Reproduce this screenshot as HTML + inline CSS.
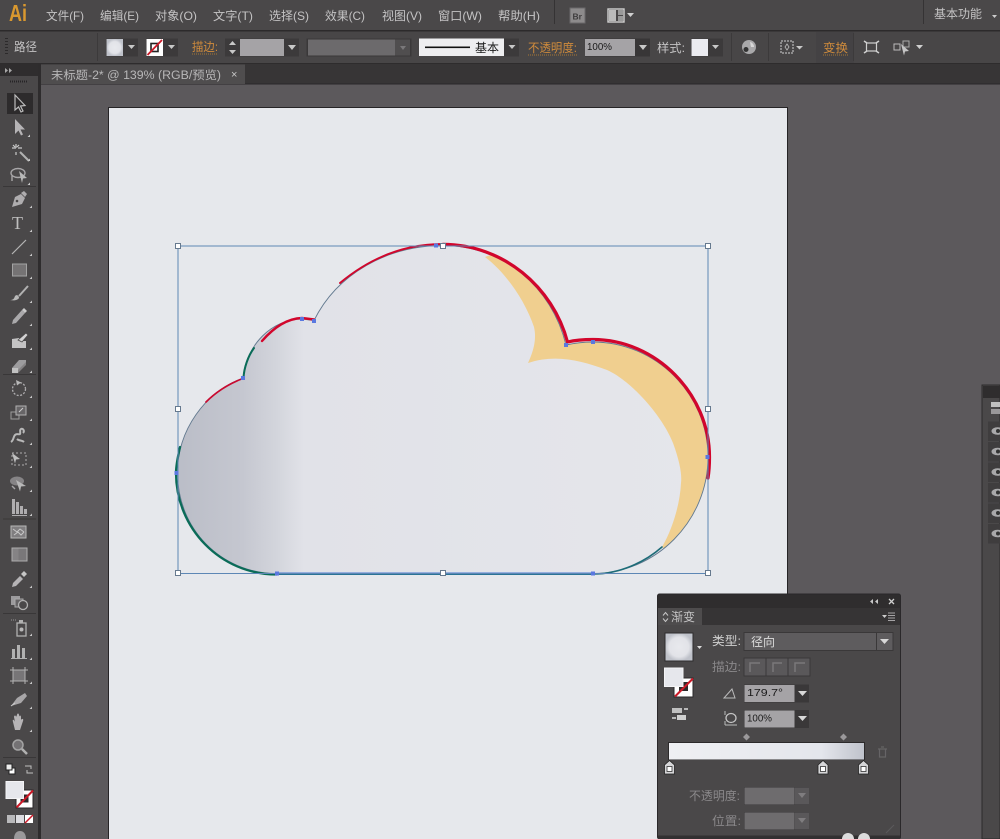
<!DOCTYPE html>
<html><head><meta charset="utf-8"><style>
html,body{margin:0;padding:0;width:1000px;height:839px;overflow:hidden;background:#5c595c}
svg{display:block;filter:blur(.35px)}
text{font-family:"Liberation Sans","Noto Sans CJK SC",sans-serif;fill:#c4c3c4;font-size:12px}
.o{fill:#cf8b3c}
.d{fill:#8a888a}
.k{fill:#1a1a1a}
.i{fill:#b9b8ba;stroke:none}
.l{fill:none;stroke:#b5b4b6;stroke-width:1.4}
</style></head><body>
<svg width="1000" height="839" viewBox="0 0 1000 839" xmlns="http://www.w3.org/2000/svg">
<defs>
<linearGradient id="cg" gradientUnits="userSpaceOnUse" x1="176" y1="0" x2="708" y2="0">
<stop offset="0" stop-color="#babdc7"/><stop offset=".125" stop-color="#c5c7d0"/><stop offset=".19" stop-color="#d3d5dc"/><stop offset=".24" stop-color="#e1e2e8"/><stop offset="1" stop-color="#e5e6eb"/>
</linearGradient>
<linearGradient id="bar" x1="0" x2="1" y1="0" y2="0">
<stop offset="0" stop-color="#eff0f3"/><stop offset=".78" stop-color="#e4e6ec"/><stop offset="1" stop-color="#c0c3cc"/>
</linearGradient>
<radialGradient id="sw"><stop offset="0" stop-color="#e8e9ed"/><stop offset=".7" stop-color="#e2e3e8"/><stop offset="1" stop-color="#bfc2ca"/></radialGradient>
<clipPath id="cc"><path d="M277 573.500C220 573.500 177.500 528 177.500 473C177.500 430 205 392 243 378C246 345 272 319 302 319L314 320.500C337 274 387 245.500 443 245.500C503 245.500 552 287 566 345C575 343 584 342 593 342C656 342 708 394 708 457C708 521 656 573.500 593 573.500Z"/></clipPath>
<path id="cl" d="M277 573.500C220 573.500 177.500 528 177.500 473C177.500 430 205 392 243 378C246 345 272 319 302 319L314 320.500C337 274 387 245.500 443 245.500C503 245.500 552 287 566 345C575 343 584 342 593 342C656 342 708 394 708 457C708 521 656 573.500 593 573.500Z"/>
</defs>

<!-- canvas -->
<rect width="1000" height="839" fill="#5c595c"/>
<rect x="109" y="108" width="679" height="731" fill="#e6e8ec"/>
<path d="M108.500 839V107.500H787.500V839" fill="none" stroke="#262426" stroke-width="1"/>

<!-- cloud -->
<use href="#cl" fill="url(#cg)"/>
<g clip-path="url(#cc)">
<path d="M485 257C505 272 525 300 534 327C537 340 533 352 528 363C555 354 580 360 607 370C630 380 662 415 673 443C680 462 682 475 681 483C680 505 672 530 662 547L730 590V300L560 230Z" fill="#f0cf8f"/>
</g>
<use href="#cl" fill="none" stroke="#62798f" stroke-width=".9"/>
<g fill="none" stroke-linecap="round">
<path d="M443 244.300C503 244.300 553 287 567.500 342C576 340 585 339.500 593 339.500C656 339.500 709.500 394 709.500 457C709.500 465 709 472 708 478" stroke="#d2062c" stroke-width="3.200"/>
<path d="M443 244C405 244 370 258 340 283" stroke="#d2062c" stroke-width="1.900"/>
<path d="M262 341C275 326 288 318.500 302 318L314 319.500" stroke="#d2062c" stroke-width="2.400"/>
<path d="M206 402C216 392 228 384 244 378" stroke="#c90a30" stroke-width="1.700"/>
<path d="M180 447C177 460 176 468 176 473C176 528 220 574.500 277 574.500" stroke="#0a6c58" stroke-width="2.300"/>
<path d="M243.500 378C244 368 248 356 254 348" stroke="#0a6c58" stroke-width="2"/>
<path d="M593 574C620 574 645 562 662 547" stroke="#1d6c78" stroke-width="1.600"/>
<path d="M277 574.300H593" stroke="#0a6c58" stroke-width="1.500"/>
</g>
<path d="M277 573.500H593" stroke="#4a7ad2" stroke-width="2" fill="none"/>
<!-- selection -->
<rect x="178" y="246" width="530" height="327.500" fill="none" stroke="#5d87b5" stroke-width="1"/>
<g fill="#fff" stroke="#66798e" stroke-width="1">
<rect x="175.500" y="243.500" width="5" height="5"/><rect x="440.500" y="243.500" width="5" height="5"/><rect x="705.500" y="243.500" width="5" height="5"/>
<rect x="175.500" y="406.500" width="5" height="5"/><rect x="705.500" y="406.500" width="5" height="5"/>
<rect x="175.500" y="570.500" width="5" height="5"/><rect x="440.500" y="570.500" width="5" height="5"/><rect x="705.500" y="570.500" width="5" height="5"/>
</g>
<g fill="#5a78e0">
<rect x="241" y="376" width="4" height="4"/><rect x="300" y="317" width="4" height="4"/><rect x="312" y="319" width="4" height="4"/><rect x="174.500" y="471" width="4" height="4"/>
<rect x="275" y="571.500" width="4" height="4"/><rect x="591" y="571.500" width="4" height="4"/><rect x="705.500" y="455" width="4" height="4"/><rect x="564" y="343" width="4" height="4"/><rect x="591" y="340" width="4" height="4"/><rect x="434" y="243.500" width="4" height="4"/>
</g>

<!-- menu bar -->
<rect width="1000" height="31" fill="#4a4849"/>
<rect y="30" width="1000" height="1.500" fill="#2c2a2b"/>
<text x="9" y="21" style="font-size:23px;font-weight:bold;fill:#d9982f" textLength="18" lengthAdjust="spacingAndGlyphs">Ai</text>
<g style="font-size:12px">
<text x="46" y="20" textLength="38" lengthAdjust="spacingAndGlyphs">文件(F)</text>
<text x="100" y="20" textLength="39" lengthAdjust="spacingAndGlyphs">编辑(E)</text>
<text x="155" y="20" textLength="42" lengthAdjust="spacingAndGlyphs">对象(O)</text>
<text x="213" y="20" textLength="40" lengthAdjust="spacingAndGlyphs">文字(T)</text>
<text x="269" y="20" textLength="40" lengthAdjust="spacingAndGlyphs">选择(S)</text>
<text x="325" y="20" textLength="40" lengthAdjust="spacingAndGlyphs">效果(C)</text>
<text x="382" y="20" textLength="40" lengthAdjust="spacingAndGlyphs">视图(V)</text>
<text x="438" y="20" textLength="44" lengthAdjust="spacingAndGlyphs">窗口(W)</text>
<text x="498" y="20" textLength="42" lengthAdjust="spacingAndGlyphs">帮助(H)</text>
<text x="934" y="18" textLength="48" lengthAdjust="spacingAndGlyphs">基本功能</text>
</g>
<rect x="554" y="0" width="1" height="24" fill="#353334"/>
<rect x="923" y="0" width="1" height="24" fill="#353334"/>
<rect x="570" y="8" width="15" height="15" fill="#8d8b8c" stroke="#6a686a"/>
<text x="572.500" y="19.500" style="font-size:8.500px;font-weight:bold;fill:#3e3c3d">Br</text>
<rect x="608" y="9" width="16" height="13" fill="none" stroke="#d0d0d0" stroke-width="1.400"/>
<rect x="609" y="10" width="7" height="11" fill="#bbb"/><rect x="618" y="10" width="5" height="5" fill="#999"/><rect x="618" y="16" width="5" height="5" fill="#999"/>
<path d="M627 13h7l-3.500 4z" fill="#d0d0d0"/>
<path d="M992 15h5l-2.500 3z" fill="#ccc"/>

<!-- control bar -->
<rect y="31.500" width="1000" height="32" fill="#484647"/>
<rect y="63" width="1000" height="1" fill="#2e2c2d"/>
<g fill="#2c2a2b"><rect x="5" y="38" width="3" height="1"/><rect x="5" y="41" width="3" height="1"/><rect x="5" y="44" width="3" height="1"/><rect x="5" y="47" width="3" height="1"/><rect x="5" y="50" width="3" height="1"/><rect x="5" y="53" width="3" height="1"/></g>
<text x="14" y="51" textLength="23" lengthAdjust="spacingAndGlyphs">路径</text>
<rect x="97" y="33" width="1" height="28" fill="#3c3a3b"/>
<!-- fill swatch -->
<rect x="106" y="38.500" width="32" height="18" fill="#3c3a3b"/>
<rect x="106.500" y="39" width="16.500" height="17" fill="url(#sw)"/>
<path d="M128 45h7l-3.500 4z" fill="#c8c8c8"/>
<!-- stroke swatch -->
<rect x="146" y="38.500" width="32" height="18" fill="#3c3a3b"/>
<rect x="146.500" y="39" width="16.500" height="17" fill="#fff"/>
<rect x="151" y="43.500" width="7" height="8" fill="none" stroke="#222" stroke-width="1.600"/>
<path d="M147.500 55L162 40" stroke="#cc1a28" stroke-width="1.800"/>
<path d="M168 45h7l-3.500 4z" fill="#c8c8c8"/>
<text x="192" y="51" class="o" textLength="26" lengthAdjust="spacingAndGlyphs">描边:</text>
<path d="M192 54h26" stroke="#a87836" stroke-width="1" stroke-dasharray="1 1"/>
<rect x="225" y="38.500" width="74" height="18" fill="#3c3a3b"/>
<path d="M229 45l3.500-4 3.500 4z M229 50l3.500 4 3.500-4z" fill="#c8c8c8"/>
<rect x="240" y="39" width="44" height="17" fill="#a5a3a6"/>
<path d="M288 45h8l-4 5z" fill="#c8c8c8"/>
<rect x="306.500" y="38.500" width="105" height="18" fill="#3a3839"/>
<rect x="308" y="39.500" width="87" height="16" fill="#6c6a6c"/>
<rect x="395" y="39.500" width="15" height="16" fill="#504e4f"/>
<path d="M400 46h6l-3 4z" fill="#7a787a"/>
<rect x="419" y="38.500" width="85" height="17.500" fill="#eeeef0"/>
<rect x="425" y="46.500" width="45" height="1.600" fill="#111"/>
<text x="475" y="52" class="k" textLength="24" lengthAdjust="spacingAndGlyphs">基本</text>
<rect x="504" y="38.500" width="15" height="18" fill="#3c3a3b"/>
<path d="M508.500 45h7l-3.500 4z" fill="#c8c8c8"/>
<text x="528" y="52" class="o" textLength="49" lengthAdjust="spacingAndGlyphs">不透明度:</text>
<path d="M528 55h50" stroke="#a87836" stroke-width="1" stroke-dasharray="1 1"/>
<rect x="585" y="38.500" width="65" height="18" fill="#383637"/>
<rect x="585" y="39" width="50" height="17" fill="#a5a3a6"/>
<text x="587" y="50" class="k" style="font-size:10px" textLength="25" lengthAdjust="spacingAndGlyphs">100%</text>
<path d="M639 45h8l-4 5z" fill="#c8c8c8"/>
<text x="657" y="52" textLength="28" lengthAdjust="spacingAndGlyphs">样式:</text>
<rect x="691" y="38.500" width="32" height="18" fill="#3c3a3b"/>
<rect x="691.500" y="39" width="16.500" height="17" fill="#ebebf0"/>
<path d="M712 45h7l-3.500 4z" fill="#c8c8c8"/>
<rect x="731" y="33" width="1" height="28" fill="#3c3a3b"/>
<circle cx="749" cy="47" r="7" fill="#a9a8aa"/><circle cx="746" cy="49.500" r="2.500" fill="#333"/><path d="M750 42a5 5 0 0 1 4 5h-3z" fill="#d8d8d8"/>
<rect x="768" y="33" width="1" height="28" fill="#3c3a3b"/>
<rect x="781" y="41" width="12" height="12" fill="none" stroke="#d0d0d0" stroke-dasharray="2 1"/>
<path d="M787 44l2 3-2 3-2-3z" fill="none" stroke="#bbb" stroke-width=".8"/>
<path d="M796 46h7l-3.500 3.500z" fill="#c8c8c8"/>
<rect x="816" y="32" width="38" height="31" fill="#444244"/>
<text x="823" y="52" class="o" textLength="25" lengthAdjust="spacingAndGlyphs">变换</text>
<path d="M823 55h25" stroke="#a87836" stroke-width="1" stroke-dasharray="1 1"/>
<rect x="853" y="33" width="1" height="28" fill="#3c3a3b"/>
<rect x="866.500" y="43" width="10" height="8" fill="none" stroke="#d0d0d0" stroke-width="1.200"/>
<path d="M864 41l3 2M879 41l-3 2M864 53l3-2M879 53l-3-2" stroke="#d0d0d0" stroke-width="1.500"/>
<rect x="894" y="44" width="6" height="6" fill="none" stroke="#bbb"/><rect x="903" y="41" width="6" height="6" fill="none" stroke="#aaa"/>
<path d="M901 44l8 7-4 .5-1 4z" fill="#c5c5c5"/>
<path d="M916 45h7l-3.500 4z" fill="#d0d0d0"/>

<!-- tab bar -->
<rect y="64" width="1000" height="20" fill="#373536"/>
<rect y="83.500" width="1000" height="1" fill="#2a282a"/>
<rect x="41" y="64.500" width="204" height="19.500" fill="#4f4d4e"/>
<text x="51" y="79" style="font-size:11.500px;fill:#b8b7b8" textLength="170" lengthAdjust="spacingAndGlyphs">未标题-2* @ 139% (RGB/预览)</text>
<text x="231" y="78" style="font-size:11px;fill:#c8c8c8">×</text>

<!-- toolbar -->
<rect y="64" width="40" height="775" fill="#4a4849"/>
<rect y="64" width="38" height="12" fill="#2f2d2e"/>
<path d="M5 68l3 2.500-3 2.500zM9 68l3 2.500-3 2.500z" fill="#a8a8a8"/>
<rect x="38" y="64" width="3" height="775" fill="#2e2c2d"/>
<path d="M10 81.500h18" stroke="#262426" stroke-width="2" stroke-dasharray="1 1"/>
<rect x="7" y="93" width="26" height="21" fill="#2d2b2c"/>
<g stroke="#393738" stroke-width="1"><path d="M3 186.500h33M3 374.500h33M3 519h33M3 613.500h33M3 757.500h33"/></g>

<!-- tools -->
<g opacity=".88">
<path d="M15 95l0 15 3.500-3 2.500 5 2-1-2.500-5 4.500-.5z" fill="none" stroke="#d0d0d0" stroke-width="1.200"/>
<path d="M15 119v15l3.500-3.500 2.500 5 2-1-2.500-5 4.500 0z" fill="#c5c4c6"/>
<g transform="translate(19 151)"><path d="M1 1l9 9" stroke="#c0c0c0" stroke-width="2"/><path d="M-3-7v4M-7-3h4M-3 1v3M-1-3h4M-6-6l2 2M0-6l-2 2" stroke="#dcdcdc" stroke-width="1.200"/></g>
<g transform="translate(19 175)"><ellipse cx="-1" cy="-2" rx="7" ry="4.500" class="l"/><path d="M0-4l8 7-4 .5-1 4.500z" fill="#c8c8c8"/><path d="M-7 1v5" class="l"/></g>
<g transform="translate(19 199)"><path d="M-7 8l3-10 6-3 4 4-3 6z" fill="#bdbcbe"/><path d="M2-6l3-2 3 3-2 3z" fill="#bdbcbe"/><circle cx="-2" cy="2" r="1.300" fill="#4a4849"/></g>
<text x="12" y="229" style="font-family:'Liberation Serif',serif;font-size:18px;fill:#cfcfcf">T</text>
<path d="M12 254L26 240" stroke="#c4c4c4" stroke-width="1.200"/>
<rect x="12.500" y="264" width="14" height="12" fill="#7b797b" stroke="#b0b0b0"/>
<g transform="translate(19 294)"><path d="M9-8L0 2" stroke="#c0c0c0" stroke-width="2"/><path d="M-9 6c3 0 4-1 5-4 2-2 4 0 4 2-1 2-5 3-9 2z" fill="#c8c8c8"/></g>
<g transform="translate(19 317)"><path d="M-7 7l1-4 9-10 3 3-9 10z" fill="#b8b7b9"/><path d="M3-7l2-2 3 3-2 2z" fill="#dcdcdc"/></g>
<g transform="translate(19 340)"><path d="M-7-1l7-1 3 3h4v7h-14z" fill="#d5d5d5"/><path d="M-1 0l8-7 2 2-6 7z" fill="#e5e5e5" stroke="#4a4849" stroke-width=".8"/></g>
<g transform="translate(19 365)"><path d="M-7 3l7-8h7l0 3-7 7h-6z" fill="#a9a8aa"/><path d="M-7 3h6l0 5h-6z" fill="#d2d2d2"/><path d="M-1 8l8-8v-3l-8 8z" fill="#8c8a8c"/></g>
<g transform="translate(19 389)"><circle r="6.500" fill="none" stroke="#bdbcbe" stroke-width="1.300" stroke-dasharray="2 1.500"/><path d="M-3-9l5 2.500-4 3z" fill="#c8c8c8"/></g>
<g transform="translate(19 412)"><rect x="-8" y="0" width="8" height="7" fill="none" stroke="#a8a8a8"/><rect x="-3" y="-6" width="10" height="9" fill="#6c6a6c" stroke="#c0c0c0"/><path d="M0 0l4-4" stroke="#e0e0e0"/></g>
<g transform="translate(19 436)"><path d="M-8 6c3-2 2-5 4-7s4 0 5-1-1-4 1-5 4 2 2 4M-2 3c2 2 5 1 7 3" fill="none" stroke="#c8c8c8" stroke-width="2"/></g>
<g transform="translate(19 459)"><rect x="-7" y="-6" width="14" height="12" fill="none" stroke="#bbb" stroke-dasharray="2 2"/><path d="M-7-6l8 6-4 .5-1 4z" fill="#d0d0d0"/></g>
<g transform="translate(19 483)"><ellipse cx="-2" cy="-2" rx="7" ry="4.500" fill="#8f8d8f"/><path d="M-3-3l10 6-5 .5-1 5z" fill="#c8c8c8"/><path d="M-7 3l3 3" class="l"/></g>
<g transform="translate(19 507)" fill="#bdbcbe"><rect x="-7" y="-8" width="3" height="15"/><rect x="-3" y="-5" width="3" height="12"/><rect x="1" y="-1" width="3" height="8"/><rect x="5" y="2" width="3" height="5"/><rect x="-7" y="8" width="15" height="1"/></g>
<g transform="translate(19 532)"><rect x="-8" y="-6" width="15" height="12" fill="#888688" stroke="#c8c8c8"/><path d="M-6-3l4 3 3-3 4 3M-5 3l4-3 3 3 3-3" stroke="#dadada" fill="none"/></g>
<rect x="12" y="548" width="15" height="13" fill="#807e80" stroke="#bbb"/>
<path d="M12.500 548.500h6v12h-6z" fill="#8e8c8e"/>
<g transform="translate(19 579)"><path d="M-7 8l1-4 7-7 3 3-7 7z" fill="#c5c4c6"/><path d="M2-5l3-3 3 3-3 3z" fill="#d8d8d8"/></g>
<g transform="translate(19 602)"><rect x="-8" y="-6" width="9" height="9" fill="#a8a7a9"/><rect x="-4" y="-3" width="8" height="8" fill="#6a686a" stroke="#b8b8b8"/><circle cx="4" cy="3" r="4.500" fill="#4a4849" stroke="#c0c0c0" stroke-width="1.300"/></g>
<g transform="translate(19 627)"><rect x="-2" y="-4" width="9" height="13" fill="none" stroke="#c0c0c0" stroke-width="1.300"/><circle cx="2.500" cy="2.500" r="2" fill="#c8c8c8"/><rect x="0" y="-7" width="4" height="3" fill="#c0c0c0"/><path d="M-8-7h6" stroke="#a0a0a0" stroke-dasharray="1 1"/></g>
<g transform="translate(19 651)" fill="#c0c0c0"><rect x="-7" y="-2" width="3" height="9"/><rect x="-2" y="-6" width="3" height="13"/><rect x="3" y="-3" width="3" height="10"/><rect x="-8" y="7" width="16" height="1"/></g>
<g transform="translate(19 675)"><rect x="-6" y="-5" width="12" height="11" fill="#7e7c7e"/><path d="M-9-5h18M-9 6h18M-6-8v17M6-8v17" stroke="#c0c0c0"/></g>
<g transform="translate(19 700)"><path d="M-8 6l6-8 8-5 2 3-6 7z" fill="#b5b4b6"/><path d="M-8 6l4-3" stroke="#e0e0e0"/></g>
<g transform="translate(19 723)" fill="#c5c4c6"><path d="M-6-1c-1-3 1-3 2 0l-1-5c0-2 2-2 2 0l1-2c0-2 2-2 2 0v2c0-2 2-2 2 0l0 3c1-2 3-1 2 1l-3 9h-5z"/></g>
<g transform="translate(19 746)"><circle cx="-1" cy="-1" r="5" fill="#7a787a" stroke="#b0b0b0" stroke-width="1.500"/><path d="M3 3l5 5" stroke="#c0c0c0" stroke-width="2.500"/></g>
<g fill="#dcdcdc"><path d="M30 137v-2.500l-2.500 2.500zM30 161v-2.500l-2.500 2.500zM30 185v-2.500l-2.500 2.500zM32 208v-2.500l-2.500 2.500zM32 232v-2.500l-2.500 2.500zM32 256v-2.500l-2.500 2.500zM32 279v-2.500l-2.500 2.500zM32 303v-2.500l-2.500 2.500zM32 326v-2.500l-2.500 2.500zM32 350v-2.500l-2.500 2.500zM32 373v-2.500l-2.500 2.500zM32 398v-2.500l-2.500 2.500zM32 421v-2.500l-2.500 2.500zM32 445v-2.500l-2.500 2.500zM32 468v-2.500l-2.500 2.500zM32 492v-2.500l-2.500 2.500zM32 516v-2.500l-2.500 2.500zM32 588v-2.500l-2.500 2.500zM32 636v-2.500l-2.500 2.500zM32 660v-2.500l-2.500 2.500zM32 684v-2.500l-2.500 2.500zM32 709v-2.500l-2.500 2.500zM32 732v-2.500l-2.500 2.500z"/></g>
</g>
<!-- fill stroke -->
<rect x="9" y="768" width="6" height="6" fill="#fff" stroke="#222"/><rect x="6" y="764" width="6" height="6" fill="#eee" stroke="#222"/>
<path d="M25 766h6l0 3M33 773h-6v-3" fill="none" stroke="#c0c0c0" stroke-width="1"/>
<rect x="16" y="790" width="17" height="18" fill="#fff" stroke="#2b292a"/>
<rect x="20.500" y="794.500" width="8" height="8" fill="#2c2a2b"/>
<path d="M16.500 807.500L33 790.500" stroke="#cc1a28" stroke-width="2"/>
<rect x="6" y="781.500" width="17.500" height="17" fill="#e6e7ec" stroke="#f4f4f6"/>
<rect x="7" y="815" width="8" height="8" fill="#b9b9bb"/><rect x="16" y="815" width="8" height="8" fill="#dcdce0"/><rect x="25" y="815" width="8" height="8" fill="#fff"/><path d="M25 823l8-8" stroke="#cc1a28" stroke-width="1.500"/>
<path d="M14 839c0-6 3-8 6-8s6 2 6 8" fill="#9a989a"/>

<!-- gradient panel -->
<rect x="657.500" y="594" width="243" height="245" fill="#4a4849" stroke="#2a282a" rx="2"/>
<rect x="658" y="594.500" width="242" height="14" fill="#2f2d2e"/>
<path d="M878 599v5l-3-2.500zM873 599v5l-3-2.500z" fill="#c8c8c8"/>
<path d="M889 599l5 5M894 599l-5 5" stroke="#d0d0d0" stroke-width="1.300"/>
<rect x="658" y="608" width="242" height="17" fill="#363435"/>
<rect x="658" y="608" width="44" height="17" fill="#4e4c4d"/>
<path d="M663 615.500l2.500-3 2.500 3M663 618.500l2.500 3 2.500-3" fill="none" stroke="#c8c8c8"/>
<text x="671" y="621" textLength="24" lengthAdjust="spacingAndGlyphs">渐变</text>
<path d="M882 615h5l-2.500 3z" fill="#ccc"/>
<path d="M888 613h7M888 615.500h7M888 618h7M888 620.500h7" stroke="#a5a3a5"/>
<rect x="665" y="633" width="28" height="28" fill="url(#sw)" stroke="#2e2c2d"/>
<path d="M697 646h5l-2.500 3z" fill="#ddd"/>
<rect x="674" y="678" width="19" height="19" fill="#fff" stroke="#2a282a"/>
<rect x="679" y="682" width="9" height="9" fill="#2c2a2b"/>
<path d="M675 696.500L693 678.500" stroke="#cc1a28" stroke-width="2"/>
<rect x="664.500" y="668" width="18.500" height="18.500" fill="#e6e7ec" stroke="#f4f4f6"/>
<rect x="672" y="708" width="10" height="5" fill="#c0c0c0"/><rect x="677" y="715" width="9" height="5" fill="#d0d0d0"/><path d="M684 709h4M672 718h4" stroke="#ddd" stroke-width="1.500"/>
<text x="712" y="645" style="fill:#d0d0d0" textLength="29" lengthAdjust="spacingAndGlyphs">类型:</text>
<rect x="744" y="632.500" width="149" height="18" fill="#5e5c5e" stroke="#3a3839"/>
<text x="751" y="646" style="fill:#dcdcdc" textLength="24" lengthAdjust="spacingAndGlyphs">径向</text>
<rect x="876" y="633" width="1" height="17" fill="#3a3839"/>
<path d="M880 639h9l-4.500 5z" fill="#d8d8d8"/>
<text x="712" y="671" class="d" textLength="29" lengthAdjust="spacingAndGlyphs">描边:</text>
<rect x="744" y="658" width="66" height="18" fill="#5a585a" stroke="#3a3839"/>
<path d="M766 658v18M788 658v18" stroke="#3a3839"/>
<path d="M750 672v-9h10M773 672v-9h9M795 672v-9h10" fill="none" stroke="#7a787a" stroke-width="1.500"/>
<path d="M724 698l8-9 3 9h-11z" fill="none" stroke="#bbb"/>
<rect x="744" y="684.500" width="65" height="18" fill="#3a3839"/>
<rect x="744.500" y="685" width="50" height="17" fill="#a5a3a6"/>
<text x="747" y="696" class="k" style="font-size:10.500px" textLength="36" lengthAdjust="spacingAndGlyphs">179.7°</text>
<path d="M798 691h9l-4.500 5z" fill="#d8d8d8"/>
<ellipse cx="731" cy="718" rx="5" ry="4.500" fill="none" stroke="#c4c4c4" stroke-width="1.300"/>
<path d="M725 711v4M725 721v4M725 725h12" stroke="#bbb"/>
<rect x="744" y="710" width="65" height="18" fill="#3a3839"/>
<rect x="744.500" y="710.500" width="50" height="17" fill="#a5a3a6"/>
<text x="747" y="721.500" class="k" style="font-size:10.500px" textLength="25" lengthAdjust="spacingAndGlyphs">100%</text>
<path d="M798 716h9l-4.500 5z" fill="#d8d8d8"/>
<path d="M746.500 733.500l3.500 3.500-3.500 3.500-3.500-3.500zM843.500 733.500l3.500 3.500-3.500 3.500-3.500-3.500z" fill="#9a989a"/>
<rect x="668" y="742" width="197" height="18" fill="#2c2a2b"/>
<rect x="669" y="743" width="195" height="16.500" fill="url(#bar)"/>
<g fill="#d6d6d8" stroke="#222" stroke-width=".8">
<path d="M664.500 765l5-4.500 5 4.500v9h-10z"/><path d="M818 765l5-4.500 5 4.500v9h-10z"/><path d="M858.500 765l5-4.500 5 4.500v9h-10z"/>
</g>
<g fill="#fff" stroke="#333" stroke-width=".8"><rect x="667" y="766.500" width="5" height="5"/><rect x="820.500" y="766.500" width="5" height="5"/><rect x="861" y="766.500" width="5" height="5"/></g>
<path d="M878 749h9M879.500 749v8h6v-8M881 747h3" fill="none" stroke="#666466" stroke-width="1.200"/>
<text x="689" y="800" class="d" textLength="51" lengthAdjust="spacingAndGlyphs">不透明度:</text>
<rect x="744" y="787" width="65" height="18" fill="#3a3839"/>
<rect x="744.500" y="787.500" width="50" height="17" fill="#6e6c6e"/>
<rect x="795" y="787.500" width="14" height="17" fill="#5a585a"/>
<path d="M798 793h8l-4 5z" fill="#7f7d7f"/>
<text x="712" y="825" class="d" textLength="29" lengthAdjust="spacingAndGlyphs">位置:</text>
<rect x="744" y="812" width="65" height="18" fill="#3a3839"/>
<rect x="744.500" y="812.500" width="50" height="17" fill="#6e6c6e"/>
<rect x="795" y="812.500" width="14" height="17" fill="#5a585a"/>
<path d="M798 818h8l-4 5z" fill="#7f7d7f"/>
<rect x="658" y="835.500" width="242" height="3.500" fill="#323031"/>
<circle cx="848" cy="839" r="6" fill="#dcdcdc"/><circle cx="864" cy="839" r="6" fill="#dcdcdc"/>
<path d="M886 833l8-8" stroke="#5c5a5c"/>

<!-- right panel -->
<rect x="982" y="385" width="18" height="454" fill="#4a4849" stroke="#2c2a2b"/>
<rect x="983" y="386" width="17" height="12" fill="#2f2d2e"/>
<rect x="991" y="402" width="9" height="5" fill="#c0c0c0"/><rect x="991" y="409" width="9" height="5" fill="#9a989a"/>
<g fill="#3f3d3e"><rect x="988" y="421.500" width="12" height="19.500"/><rect x="988" y="442" width="12" height="19.500"/><rect x="988" y="462.500" width="12" height="19.500"/><rect x="988" y="483" width="12" height="19.500"/><rect x="988" y="503.500" width="12" height="19.500"/><rect x="988" y="524" width="12" height="19.500"/></g>
<g fill="#a9a8aa"><ellipse cx="997.500" cy="431" rx="6" ry="3.800"/><ellipse cx="997.500" cy="451.500" rx="6" ry="3.800"/><ellipse cx="997.500" cy="472" rx="6" ry="3.800"/><ellipse cx="997.500" cy="492.500" rx="6" ry="3.800"/><ellipse cx="997.500" cy="513" rx="6" ry="3.800"/><ellipse cx="997.500" cy="533.500" rx="6" ry="3.800"/></g>
<g fill="#333"><circle cx="998" cy="431" r="2"/><circle cx="998" cy="451.500" r="2"/><circle cx="998" cy="472" r="2"/><circle cx="998" cy="492.500" r="2"/><circle cx="998" cy="513" r="2"/><circle cx="998" cy="533.500" r="2"/></g>
</svg>
</body></html>
